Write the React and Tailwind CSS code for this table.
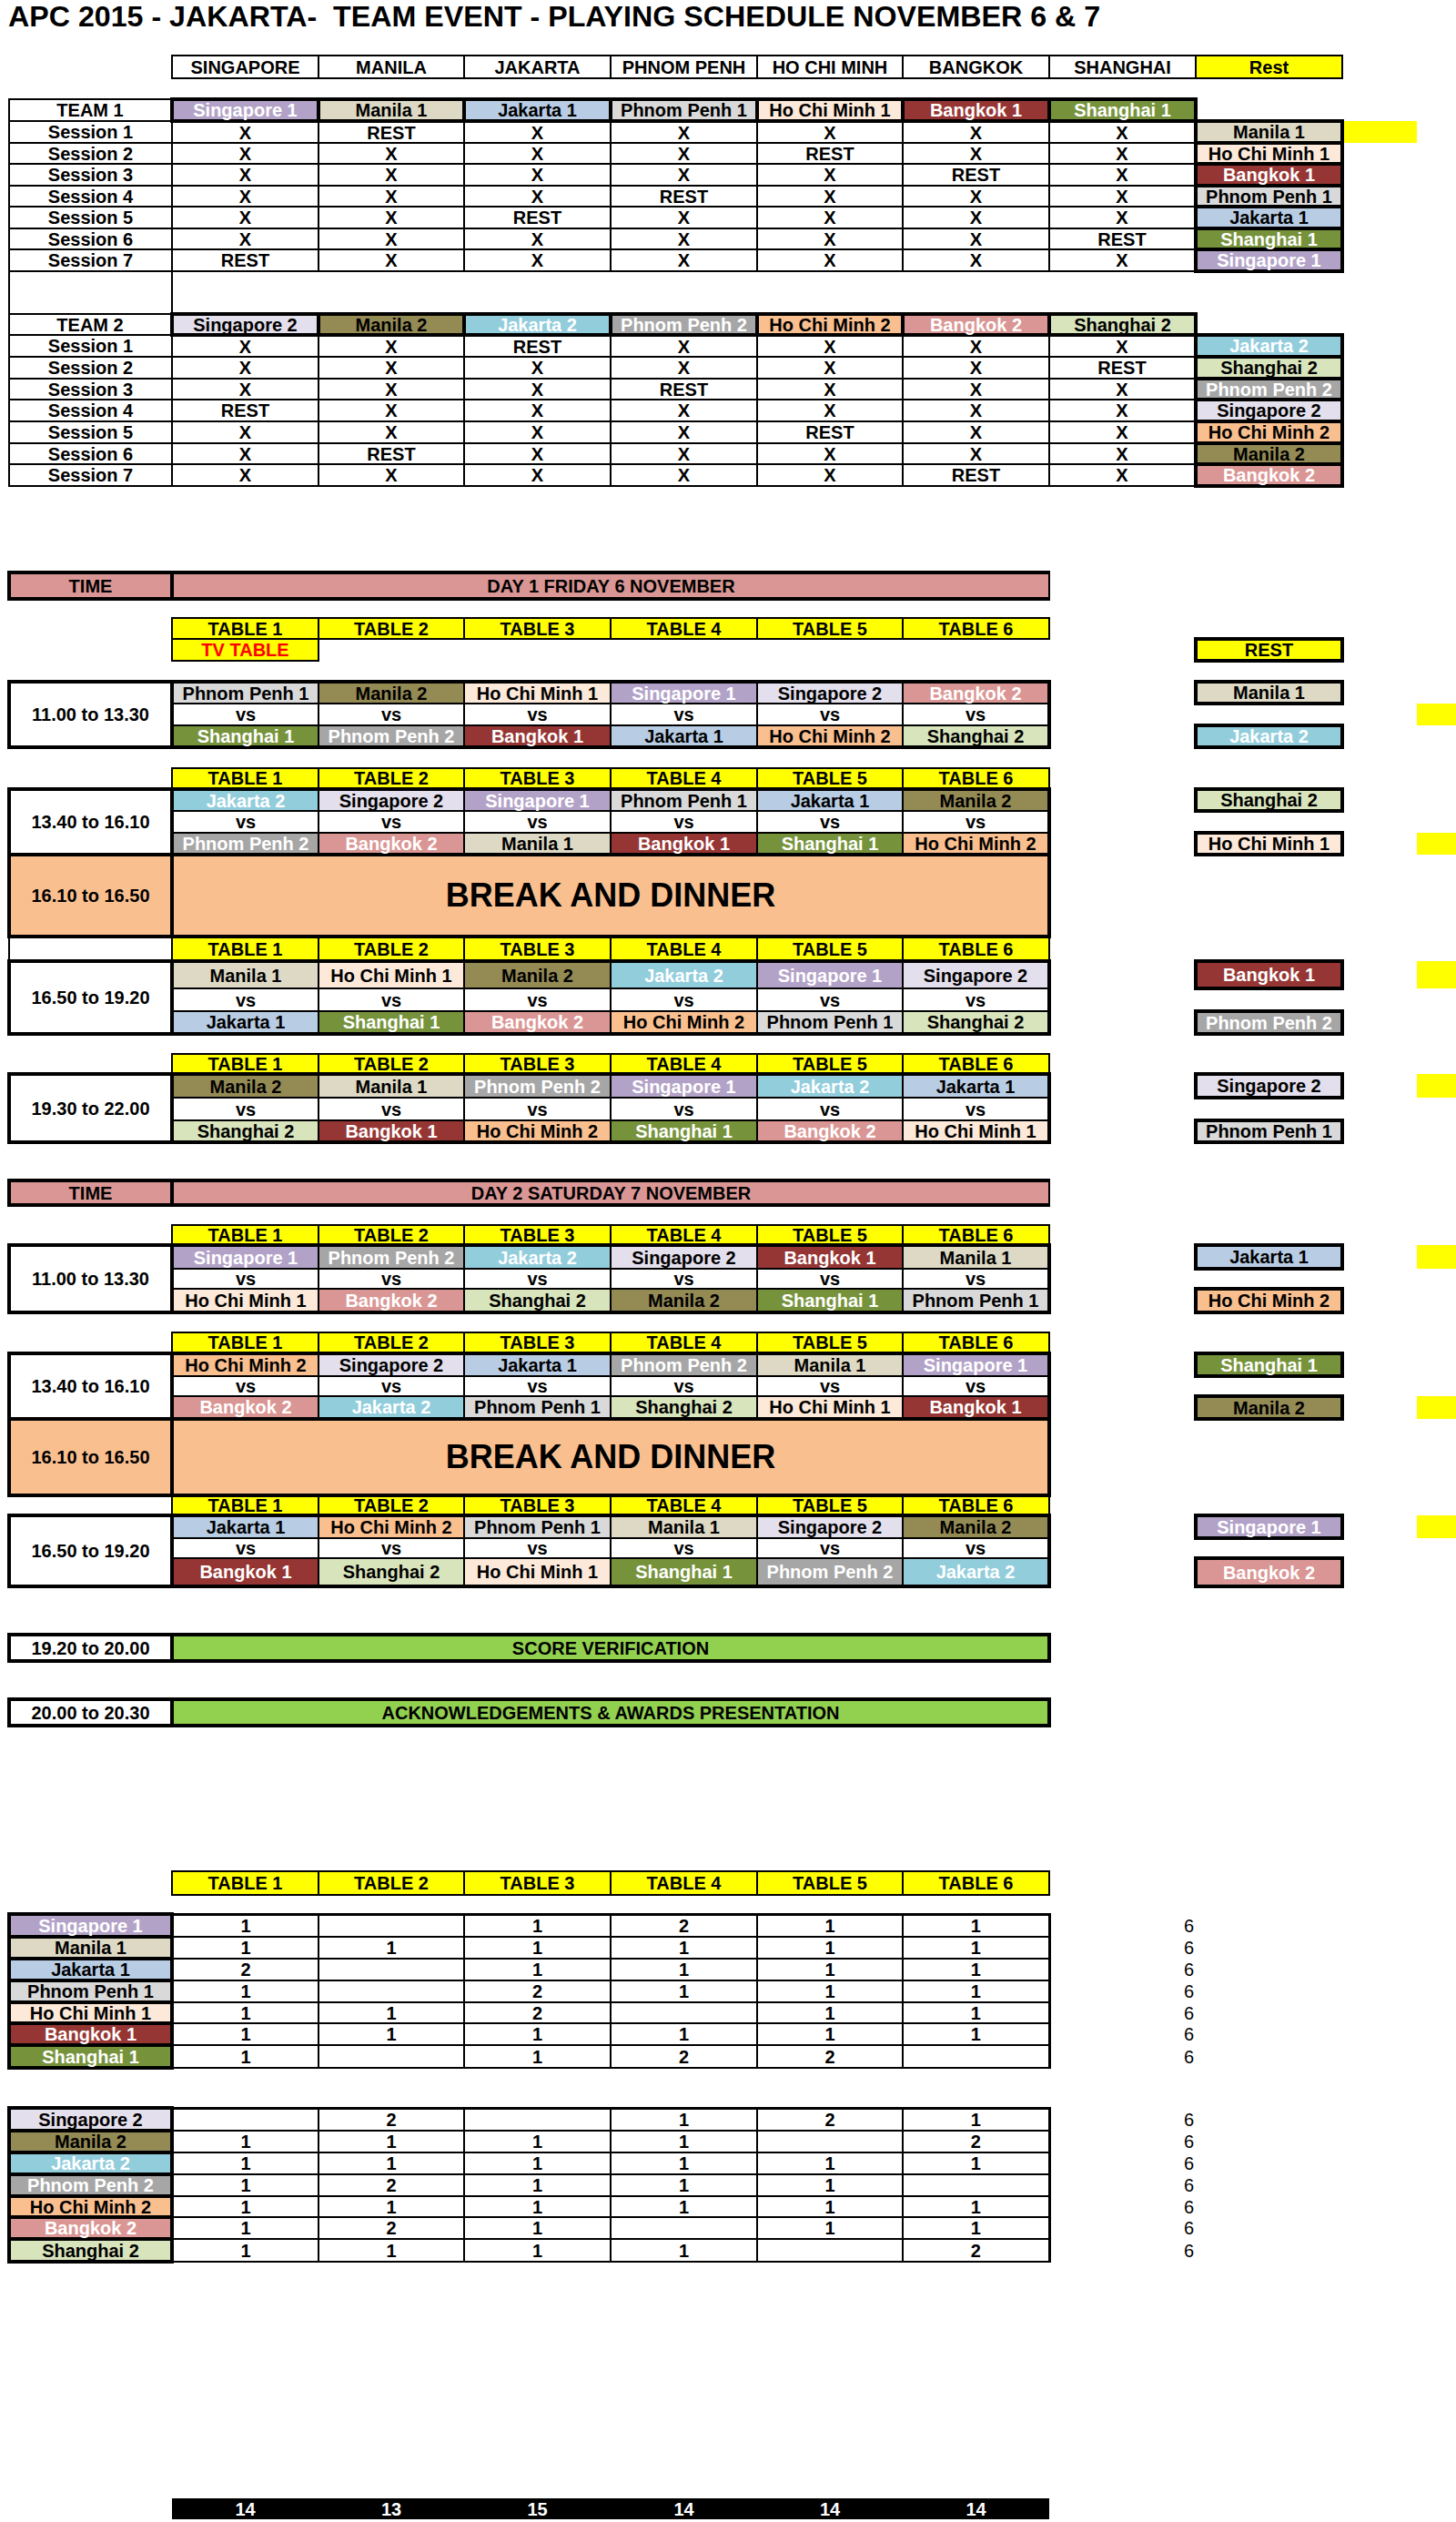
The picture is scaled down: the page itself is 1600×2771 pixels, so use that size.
import React from 'react';

const TEAM = {
  'Singapore 1': 'bg-[#b3a2c7] text-white',
  'Manila 1': 'bg-[#ddd9c4] text-black',
  'Jakarta 1': 'bg-[#b8cce4] text-black',
  'Phnom Penh 1': 'bg-[#d9d9d9] text-black',
  'Ho Chi Minh 1': 'bg-[#fde9d9] text-black',
  'Bangkok 1': 'bg-[#963634] text-white',
  'Shanghai 1': 'bg-[#76933c] text-white',
  'Singapore 2': 'bg-[#e4dfec] text-black',
  'Manila 2': 'bg-[#948a54] text-black',
  'Jakarta 2': 'bg-[#92cddc] text-white',
  'Phnom Penh 2': 'bg-[#a6a6a6] text-white',
  'Ho Chi Minh 2': 'bg-[#fabf8f] text-black',
  'Bangkok 2': 'bg-[#da9694] text-white',
  'Shanghai 2': 'bg-[#d8e4bc] text-black',
};

const base = 'p-0 text-center align-middle font-bold text-[20px] leading-[16px] whitespace-nowrap';
const thin = 'border-2 border-black';
const thick = 'border-4 border-black';
const Y = 'bg-[#ffff00]';

const CITIES = ['SINGAPORE', 'MANILA', 'JAKARTA', 'PHNOM PENH', 'HO CHI MINH', 'BANGKOK', 'SHANGHAI'];
const TEAMS1 = ['Singapore 1', 'Manila 1', 'Jakarta 1', 'Phnom Penh 1', 'Ho Chi Minh 1', 'Bangkok 1', 'Shanghai 1'];
const TEAMS2 = ['Singapore 2', 'Manila 2', 'Jakarta 2', 'Phnom Penh 2', 'Ho Chi Minh 2', 'Bangkok 2', 'Shanghai 2'];

function Spacer({ h }) {
  return (
    <tr className={h}>
      <td colSpan={11} />
    </tr>
  );
}

function TopSection({ label, teams, restIdx, heights, yellowFirst }) {
  return (
    <>
      <tr className={heights[0]}>
        <td className={`${base} ${thin} bg-white`}>{label}</td>
        {teams.map((t) => (
          <td key={t} className={`${base} ${thick} ${TEAM[t]}`}>{t}</td>
        ))}
        <td />
        <td />
        <td />
      </tr>
      {restIdx.map((r, i) => (
        <tr key={i} className={heights[i + 1]}>
          <td className={`${base} ${thin}`}>Session {i + 1}</td>
          {teams.map((t, j) => (
            <td key={j} className={`${base} ${thin}`}>{j === r ? 'REST' : 'X'}</td>
          ))}
          <td className={`${base} ${thick} ${TEAM[teams[r]]}`}>{teams[r]}</td>
          <td className={yellowFirst && i === 0 ? Y : ''} />
          <td />
        </tr>
      ))}
    </>
  );
}

function TableHeader({ h, boxA }) {
  return (
    <tr className={h}>
      <td className={boxA ? thin : ''} />
      {[1, 2, 3, 4, 5, 6].map((n) => (
        <td key={n} className={`${base} ${thin} ${Y}`}>TABLE {n}</td>
      ))}
      <td />
      <td />
      <td />
      <td />
    </tr>
  );
}

function TimeBar({ h, title }) {
  return (
    <tr className={h}>
      <td className={`${base} ${thick} bg-[#da9694]`}>TIME</td>
      <td colSpan={6} className={`${base} border-y-4 border-r-2 border-black bg-[#da9694]`}>{title}</td>
      <td colSpan={4} />
    </tr>
  );
}

function Block({ time, pairs, rest, yellow, hs }) {
  const restCell = (name) =>
    name ? <td className={`${base} ${thick} ${TEAM[name]}`}>{name}</td> : <td />;
  return (
    <>
      <tr className={hs[0]}>
        <td rowSpan={3} className={`${base} ${thick} bg-white`}>{time}</td>
        {pairs.map(([a], i) => (
          <td key={i} className={`${base} ${thin} border-t-4 ${i === 5 ? 'border-r-4' : ''} ${TEAM[a]}`}>{a}</td>
        ))}
        <td />
        {restCell(rest[0])}
        <td />
        <td className={yellow === 0 ? Y : ''} />
      </tr>
      <tr className={hs[1]}>
        {pairs.map((p, i) => (
          <td key={i} className={`${base} ${thin} ${i === 5 ? 'border-r-4' : ''} bg-white`}>vs</td>
        ))}
        <td />
        <td />
        <td />
        <td className={yellow === 1 ? Y : ''} />
      </tr>
      <tr className={hs[2]}>
        {pairs.map(([, b], i) => (
          <td key={i} className={`${base} ${thin} border-b-4 ${i === 5 ? 'border-r-4' : ''} ${TEAM[b]}`}>{b}</td>
        ))}
        <td />
        {restCell(rest[1])}
        <td />
        <td className={yellow === 2 ? Y : ''} />
      </tr>
    </>
  );
}

function Break({ h, time }) {
  return (
    <tr className={h}>
      <td className={`${base} ${thick} bg-[#fabf8f]`}>{time}</td>
      <td colSpan={6} className={`p-0 text-center align-middle font-bold text-[36px] leading-[36px] ${thick} bg-[#fabf8f]`}>
        BREAK AND DINNER
      </td>
      <td colSpan={4} />
    </tr>
  );
}

function GreenBar({ time, text }) {
  return (
    <tr className="h-[29px]">
      <td className={`${base} ${thick} bg-white`}>{time}</td>
      <td colSpan={6} className={`${base} ${thick} bg-[#92d050]`}>{text}</td>
      <td colSpan={4} />
    </tr>
  );
}

function SummaryRows({ rows, hs }) {
  return rows.map(([name, nums], i) => (
    <tr key={name} className={hs[i]}>
      <td className={`${base} ${thick} ${TEAM[name]}`}>{name}</td>
      {nums.map((n, j) => (
        <td key={j} className={`${base} ${thin} ${i === 0 ? 'border-t-[3px]' : ''} ${j === 5 ? 'border-r-[3px]' : ''} bg-white`}>{n}</td>
      ))}
      <td className="p-0 pr-[2px] text-right align-middle text-[20px] leading-[16px] font-normal">6</td>
      <td />
      <td />
      <td />
    </tr>
  ));
}

const B3 = ['h-[24px]', 'h-[24px]', 'h-[24px]'];

export default function App() {
  return (
    <div className="w-[1600px] min-h-[2771px] bg-white text-black font-['Liberation_Sans',Arial,sans-serif]">
      <div className="h-[60px] pl-[9px] pt-[2px] text-[32.2px] font-bold leading-[32px] whitespace-pre">
        APC 2015 - JAKARTA-  TEAM EVENT - PLAYING SCHEDULE NOVEMBER 6 &amp; 7
      </div>
      <table className="ml-[8px] w-[1592px] table-fixed border-collapse">
        <colgroup>
          <col className="w-[179px]" />
          <col className="w-[161px]" />
          <col className="w-[160px]" />
          <col className="w-[161px]" />
          <col className="w-[161px]" />
          <col className="w-[160px]" />
          <col className="w-[161px]" />
          <col className="w-[161px]" />
          <col className="w-[161px]" />
          <col className="w-[82px]" />
          <col className="w-[45px]" />
        </colgroup>
        <tbody>
          <tr className="h-[25px]">
            <td />
            {CITIES.map((c) => (
              <td key={c} className={`${base} ${thin}`}>{c}</td>
            ))}
            <td className={`${base} ${thin} ${Y}`}>Rest</td>
            <td />
            <td />
          </tr>
          <Spacer h="h-[23px]" />
          <TopSection
            label="TEAM 1"
            teams={TEAMS1}
            restIdx={[1, 4, 5, 3, 2, 6, 0]}
            heights={['h-[24px]', 'h-[24px]', 'h-[23px]', 'h-[24px]', 'h-[23px]', 'h-[24px]', 'h-[23px]', 'h-[24px]']}
            yellowFirst
          />
          <tr className="h-[47px]">
            <td className="border-x-2 border-black" />
            <td colSpan={10} />
          </tr>
          <TopSection
            label="TEAM 2"
            teams={TEAMS2}
            restIdx={[2, 6, 3, 0, 4, 1, 5]}
            heights={['h-[23px]', 'h-[24px]', 'h-[24px]', 'h-[23px]', 'h-[24px]', 'h-[24px]', 'h-[23px]', 'h-[24px]']}
          />
          <Spacer h="h-[95px]" />

          <TimeBar h="h-[29px]" title="DAY 1 FRIDAY 6 NOVEMBER" />
          <Spacer h="h-[21px]" />
          <TableHeader h="h-[23px]" />
          <tr className="h-[24px]">
            <td />
            <td className={`${base} ${thin} ${Y} text-[#ff0000]`}>TV TABLE</td>
            <td colSpan={5} />
            <td />
            <td className={`${base} ${thick} ${Y}`}>REST</td>
            <td />
            <td />
          </tr>
          <Spacer h="h-[23px]" />
          <Block
            time="11.00 to 13.30"
            pairs={[
              ['Phnom Penh 1', 'Shanghai 1'],
              ['Manila 2', 'Phnom Penh 2'],
              ['Ho Chi Minh 1', 'Bangkok 1'],
              ['Singapore 1', 'Jakarta 1'],
              ['Singapore 2', 'Ho Chi Minh 2'],
              ['Bangkok 2', 'Shanghai 2'],
            ]}
            rest={['Manila 1', 'Jakarta 2']}
            yellow={1}
            hs={B3}
          />
          <Spacer h="h-[23px]" />
          <TableHeader h="h-[23px]" />
          <Block
            time="13.40 to 16.10"
            pairs={[
              ['Jakarta 2', 'Phnom Penh 2'],
              ['Singapore 2', 'Bangkok 2'],
              ['Singapore 1', 'Manila 1'],
              ['Phnom Penh 1', 'Bangkok 1'],
              ['Jakarta 1', 'Shanghai 1'],
              ['Manila 2', 'Ho Chi Minh 2'],
            ]}
            rest={['Shanghai 2', 'Ho Chi Minh 1']}
            yellow={2}
            hs={B3}
          />
          <Break h="h-[90px]" time="16.10 to 16.50" />
          <TableHeader h="h-[27px]" boxA />
          <Block
            time="16.50 to 19.20"
            pairs={[
              ['Manila 1', 'Jakarta 1'],
              ['Ho Chi Minh 1', 'Shanghai 1'],
              ['Manila 2', 'Bangkok 2'],
              ['Jakarta 2', 'Ho Chi Minh 2'],
              ['Singapore 1', 'Phnom Penh 1'],
              ['Singapore 2', 'Shanghai 2'],
            ]}
            rest={['Bangkok 1', 'Phnom Penh 2']}
            yellow={0}
            hs={['h-[30px]', 'h-[25px]', 'h-[25px]']}
          />
          <Spacer h="h-[22px]" />
          <TableHeader h="h-[22px]" />
          <Block
            time="19.30 to 22.00"
            pairs={[
              ['Manila 2', 'Shanghai 2'],
              ['Manila 1', 'Bangkok 1'],
              ['Phnom Penh 2', 'Ho Chi Minh 2'],
              ['Singapore 1', 'Shanghai 1'],
              ['Jakarta 2', 'Bangkok 2'],
              ['Jakarta 1', 'Ho Chi Minh 1'],
            ]}
            rest={['Singapore 2', 'Phnom Penh 1']}
            yellow={0}
            hs={['h-[26px]', 'h-[25px]', 'h-[24px]']}
          />
          <Spacer h="h-[42px]" />

          <TimeBar h="h-[27px]" title="DAY 2 SATURDAY 7 NOVEMBER" />
          <Spacer h="h-[22px]" />
          <TableHeader h="h-[22px]" />
          <Block
            time="11.00 to 13.30"
            pairs={[
              ['Singapore 1', 'Ho Chi Minh 1'],
              ['Phnom Penh 2', 'Bangkok 2'],
              ['Jakarta 2', 'Shanghai 2'],
              ['Singapore 2', 'Manila 2'],
              ['Bangkok 1', 'Shanghai 1'],
              ['Manila 1', 'Phnom Penh 1'],
            ]}
            rest={['Jakarta 1', 'Ho Chi Minh 2']}
            yellow={0}
            hs={['h-[26px]', 'h-[22px]', 'h-[26px]']}
          />
          <Spacer h="h-[22px]" />
          <TableHeader h="h-[23px]" />
          <Block
            time="13.40 to 16.10"
            pairs={[
              ['Ho Chi Minh 2', 'Bangkok 2'],
              ['Singapore 2', 'Jakarta 2'],
              ['Jakarta 1', 'Phnom Penh 1'],
              ['Phnom Penh 2', 'Shanghai 2'],
              ['Manila 1', 'Ho Chi Minh 1'],
              ['Singapore 1', 'Bangkok 1'],
            ]}
            rest={['Shanghai 1', 'Manila 2']}
            yellow={2}
            hs={['h-[25px]', 'h-[22px]', 'h-[25px]']}
          />
          <Break h="h-[84px]" time="16.10 to 16.50" />
          <TableHeader h="h-[22px]" />
          <Block
            time="16.50 to 19.20"
            pairs={[
              ['Jakarta 1', 'Bangkok 1'],
              ['Ho Chi Minh 2', 'Shanghai 2'],
              ['Phnom Penh 1', 'Ho Chi Minh 1'],
              ['Manila 1', 'Shanghai 1'],
              ['Singapore 2', 'Phnom Penh 2'],
              ['Manila 2', 'Jakarta 2'],
            ]}
            rest={['Singapore 1', 'Bangkok 2']}
            yellow={0}
            hs={['h-[25px]', 'h-[22px]', 'h-[31px]']}
          />
          <Spacer h="h-[53px]" />
          <GreenBar time="19.20 to 20.00" text="SCORE VERIFICATION" />
          <Spacer h="h-[42px]" />
          <GreenBar time="20.00 to 20.30" text="ACKNOWLEDGEMENTS & AWARDS PRESENTATION" />
          <Spacer h="h-[160px]" />

          <TableHeader h="h-[26px]" />
          <Spacer h="h-[21px]" />
          <SummaryRows
            hs={['h-[25px]', 'h-[24px]', 'h-[24px]', 'h-[24px]', 'h-[23px]', 'h-[24px]', 'h-[25px]']}
            rows={[
              ['Singapore 1', ['1', '', '1', '2', '1', '1']],
              ['Manila 1', ['1', '1', '1', '1', '1', '1']],
              ['Jakarta 1', ['2', '', '1', '1', '1', '1']],
              ['Phnom Penh 1', ['1', '', '2', '1', '1', '1']],
              ['Ho Chi Minh 1', ['1', '1', '2', '', '1', '1']],
              ['Bangkok 1', ['1', '1', '1', '1', '1', '1']],
              ['Shanghai 1', ['1', '', '1', '2', '2', '']],
            ]}
          />
          <Spacer h="h-[44px]" />
          <SummaryRows
            hs={['h-[25px]', 'h-[24px]', 'h-[24px]', 'h-[24px]', 'h-[23px]', 'h-[24px]', 'h-[25px]']}
            rows={[
              ['Singapore 2', ['', '2', '', '1', '2', '1']],
              ['Manila 2', ['1', '1', '1', '1', '', '2']],
              ['Jakarta 2', ['1', '1', '1', '1', '1', '1']],
              ['Phnom Penh 2', ['1', '2', '1', '1', '1', '']],
              ['Ho Chi Minh 2', ['1', '1', '1', '1', '1', '1']],
              ['Bangkok 2', ['1', '2', '1', '', '1', '1']],
              ['Shanghai 2', ['1', '1', '1', '1', '', '2']],
            ]}
          />
          <Spacer h="h-[260px]" />
          <tr className="h-[23px]">
            <td />
            {['14', '13', '15', '14', '14', '14'].map((n, i) => (
              <td key={i} className={`${base} bg-black text-white`}>{n}</td>
            ))}
            <td colSpan={4} />
          </tr>
        </tbody>
      </table>
    </div>
  );
}
